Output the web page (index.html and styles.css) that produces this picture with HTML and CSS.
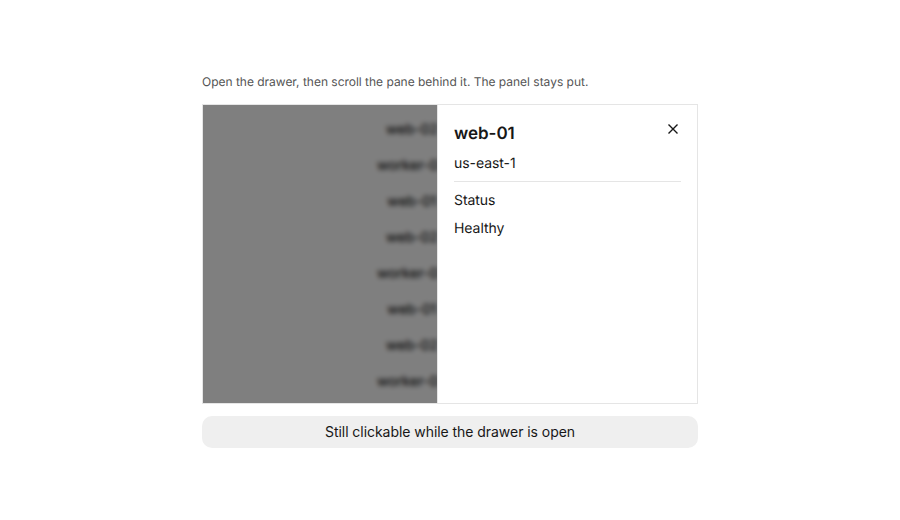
FILE: index.html
```html
<!DOCTYPE html>
<html lang="en">
<head>
  <meta charset="UTF-8" />
  <title>Drawer in scroll pane</title>
  <link rel="stylesheet" href="styles.css">
</head>
<body>

  <div class="demo">
    <p class="hint">Open the drawer, then scroll the pane behind it. The panel stays put.</p>

    <div class="pane">
      <div class="rows">
        <div class="row">web-02</div>
        <div class="row">worker-03</div>
        <div class="row">web-01</div>
        <div class="row">web-02</div>
        <div class="row">worker-03</div>
        <div class="row">web-01</div>
        <div class="row">web-02</div>
        <div class="row">worker-03</div>
      </div>

      <div class="backdrop"></div>

      <aside class="drawer">
        <button class="close" aria-label="Close">
          <svg width="12" height="12" viewBox="0 0 12 12" fill="none" stroke="#171717" stroke-width="1.4">
            <path d="M1.5 1.5 10.5 10.5M10.5 1.5 1.5 10.5"/>
          </svg>
        </button>
        <h2 class="title">web-01</h2>
        <div class="region">us-east-1</div>
        <div class="label">Status</div>
        <div class="value">Healthy</div>
      </aside>
    </div>

    <button class="action">Still clickable while the drawer is open</button>
  </div>

</body>
</html>
```

FILE: styles.css
```css
* {
  box-sizing: border-box;
}

body {
  margin: 0;
  height: 520px;
  font-family: Inter, 'Liberation Sans', sans-serif;
  text-rendering: geometricPrecision;
  letter-spacing: -0.05px;
  background-color: #fff;
  color: #171717;
  display: flex;
  justify-content: center;
  overflow: hidden;
}

.demo {
  width: 496px;
  padding-top: 73px;
}

.hint {
  margin: 0 0 13px;
  font-size: 12px;
  line-height: 18px;
  letter-spacing: -0.015px;
  color: #555;
}

.pane {
  position: relative;
  height: 300px;
  border: 1px solid #e5e5e5;
  overflow: hidden;
}

.rows {
  width: 418px;
  padding-top: 7px;
}

.row {
  height: 36px;
  line-height: 36px;
  font-size: 14px;
  font-weight: 500;
  text-align: center;
}

.backdrop {
  position: absolute;
  top: 0;
  right: 0;
  bottom: 0;
  left: 0;
  background: rgba(0, 0, 0, 0.5);
  backdrop-filter: blur(2.5px);
}

.drawer {
  position: absolute;
  top: 0;
  right: 0;
  bottom: 0;
  width: 260px;
  padding: 17px 16px 16px;
  background: #fff;
  border-left: 1px solid #e5e5e5;
}

.close {
  position: absolute;
  top: 18px;
  right: 18px;
  width: 12px;
  height: 12px;
  padding: 0;
  border: none;
  background: none;
  display: flex;
}

.title {
  margin: 0;
  font-size: 17px;
  line-height: 24px;
  font-weight: 600;
}

.region {
  margin-top: 7px;
  padding-bottom: 6px;
  font-size: 14px;
  line-height: 22px;
  border-bottom: 1px solid #e5e5e5;
}

.label {
  margin-top: 9px;
  font-size: 14px;
  line-height: 20px;
}

.value {
  margin-top: 8px;
  font-size: 14px;
  line-height: 20px;
}

.action {
  display: block;
  width: 100%;
  height: 32px;
  margin-top: 12px;
  padding: 0 0 2px;
  border: none;
  border-radius: 10px;
  background-color: #efefef;
  color: #171717;
  font-family: inherit;
  font-size: 14px;
  letter-spacing: -0.05px;
}
```
